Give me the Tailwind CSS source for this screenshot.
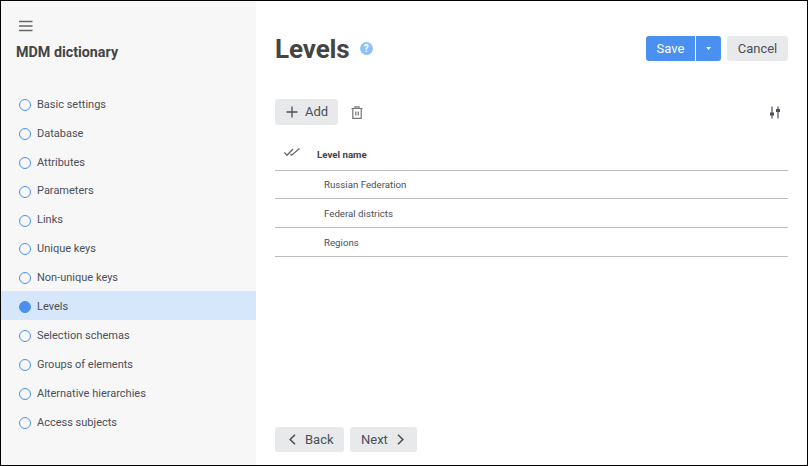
<!DOCTYPE html>
<html>
<head>
<meta charset="utf-8">
<script src="https://cdn.jsdelivr.net/npm/@tailwindcss/browser@4"></script>
</head>
<body class="m-0">
<div class="w-[808px] h-[466px] border border-black bg-white flex overflow-hidden font-['Roboto',sans-serif] text-[#4a4f5a]">
  <aside class="w-[255px] shrink-0 bg-[#f7f7f7] flex flex-col">
    <div class="pl-[18px] pt-[19px] h-[30px]">
      <svg width="14" height="12" viewBox="0 0 14 12" class="block"><path d="M0 1.5h13.5M0 6h13.5M0 10.5h13.5" stroke="#666" stroke-width="1.4" fill="none"/></svg>
    </div>
    <div class="pl-[15px] mt-[11px] text-[14.3px] leading-[20px] font-bold text-[#444]">MDM dictionary</div>
    <nav class="mt-[27px] flex flex-col text-[11px]">
      <div class="h-[28.9px] pt-[3.2px] flex items-center pl-[18px] gap-[6px]"><span class="w-[10px] h-[10px] rounded-full border border-[#4a90f0] box-content"></span><span>Basic settings</span></div>
      <div class="h-[28.9px] pt-[3.2px] flex items-center pl-[18px] gap-[6px]"><span class="w-[10px] h-[10px] rounded-full border border-[#4a90f0] box-content"></span><span>Database</span></div>
      <div class="h-[28.9px] pt-[3.2px] flex items-center pl-[18px] gap-[6px]"><span class="w-[10px] h-[10px] rounded-full border border-[#4a90f0] box-content"></span><span>Attributes</span></div>
      <div class="h-[28.9px] pt-[3.2px] flex items-center pl-[18px] gap-[6px]"><span class="w-[10px] h-[10px] rounded-full border border-[#4a90f0] box-content"></span><span>Parameters</span></div>
      <div class="h-[28.9px] pt-[3.2px] flex items-center pl-[18px] gap-[6px]"><span class="w-[10px] h-[10px] rounded-full border border-[#4a90f0] box-content"></span><span>Links</span></div>
      <div class="h-[28.9px] pt-[3.2px] flex items-center pl-[18px] gap-[6px]"><span class="w-[10px] h-[10px] rounded-full border border-[#4a90f0] box-content"></span><span>Unique keys</span></div>
      <div class="h-[28.9px] pt-[3.2px] flex items-center pl-[18px] gap-[6px]"><span class="w-[10px] h-[10px] rounded-full border border-[#4a90f0] box-content"></span><span>Non-unique keys</span></div>
      <div class="h-[28.9px] pt-[3.2px] flex items-center pl-[18px] gap-[6px] bg-[#d7e7fb]"><span class="w-[10px] h-[10px] rounded-full border border-[#4a90f0] bg-[#4a90f0] box-content"></span><span>Levels</span></div>
      <div class="h-[28.9px] pt-[3.2px] flex items-center pl-[18px] gap-[6px]"><span class="w-[10px] h-[10px] rounded-full border border-[#4a90f0] box-content"></span><span>Selection schemas</span></div>
      <div class="h-[28.9px] pt-[3.2px] flex items-center pl-[18px] gap-[6px]"><span class="w-[10px] h-[10px] rounded-full border border-[#4a90f0] box-content"></span><span>Groups of elements</span></div>
      <div class="h-[28.9px] pt-[3.2px] flex items-center pl-[18px] gap-[6px]"><span class="w-[10px] h-[10px] rounded-full border border-[#4a90f0] box-content"></span><span>Alternative hierarchies</span></div>
      <div class="h-[28.9px] pt-[3.2px] flex items-center pl-[18px] gap-[6px]"><span class="w-[10px] h-[10px] rounded-full border border-[#4a90f0] box-content"></span><span>Access subjects</span></div>
    </nav>
  </aside>
  <main class="flex-1 flex flex-col pl-[19px] pr-[19px]">
    <div class="flex items-center justify-between pt-[32px] h-[62px]">
      <div class="flex items-center gap-[10px]">
        <h1 class="text-[26px] leading-[34px] mt-[2px] font-bold text-[#444] tracking-[-0.1px]">Levels</h1>
        <span class="w-[13px] h-[13px] rounded-full bg-[#90c0fa] text-white text-[10px] font-bold leading-[13px] text-center mt-[1px]">?</span>
      </div>
      <div class="flex items-center gap-[6px] text-[13px]">
        <div class="flex h-[25px] rounded-[3px] overflow-hidden text-white">
          <div class="w-[49px] pt-[1px] bg-[#4a90f0] flex items-center justify-center">Save</div>
          <div class="w-[25px] ml-[1px] bg-[#4a90f0] flex items-center justify-center"><svg width="5" height="3" viewBox="0 0 5 3"><path d="M0 0h5L2.5 3z" fill="#fff"/></svg></div>
        </div>
        <div class="w-[61px] h-[25px] pt-[1px] rounded-[3px] bg-[#e8e9eb] flex items-center justify-center">Cancel</div>
      </div>
    </div>
    <div class="flex items-center mt-[36px] h-[26px] text-[13px]">
      <div class="w-[63px] h-[26px] rounded-[3px] bg-[#e8e9eb] flex items-center pl-[11px] gap-[7px]">
        <svg width="12" height="12" viewBox="0 0 12 12"><path d="M6 0.5v11M0.5 6h11" stroke="#4a4f5a" stroke-width="1.3" fill="none"/></svg>
        <span>Add</span>
      </div>
      <svg class="ml-[13px]" width="12" height="13" viewBox="0 0 12 13" fill="none" stroke="#777" stroke-width="1.2"><path d="M0.5 2.5h11M4 2.5V0.8h4v1.7M1.8 2.5v9.8h8.4V2.5M4.8 5.5v4M7.2 5.5v4"/></svg>
      <svg class="ml-auto mr-[7px]" width="12" height="13" viewBox="0 0 12 13" fill="none" stroke="#4a4f5a" stroke-width="1.2"><path d="M3 0.5v12M9 0.5v12"/><rect x="1" y="6.5" width="4" height="3" fill="#4a4f5a" stroke="none"/><rect x="7" y="3" width="4" height="3" fill="#4a4f5a" stroke="none"/></svg>
    </div>
    <div class="mt-[15px] flex flex-col text-[9.7px]">
      <div class="h-[31px] flex items-center border-b border-[#bdbdbd] font-bold text-[#444]">
        <svg class="ml-[9px] mb-[5px]" width="16" height="9" viewBox="0 0 16 9" fill="none" stroke="#666" stroke-width="1.3"><path d="M0.3 4.5L3 7.2 9 1M6.5 6L7.7 7.2 15.5 0.5"/></svg>
        <span class="ml-[17px]">Level name</span>
      </div>
      <div class="h-[28.4px] pt-[1px] flex items-center border-b border-[#bdbdbd] pl-[49px]">Russian Federation</div>
      <div class="h-[29px] pt-[1px] flex items-center border-b border-[#bdbdbd] pl-[49px]">Federal districts</div>
      <div class="h-[29px] pt-[1px] flex items-center border-b border-[#bdbdbd] pl-[49px]">Regions</div>
    </div>
    <div class="mt-auto mb-[13px] flex gap-[6px] text-[13px]">
      <div class="w-[69px] h-[25px] rounded-[3px] bg-[#e8e9eb] flex items-center pl-[14px] gap-[9px]">
        <svg width="7" height="11" viewBox="0 0 7 11" fill="none" stroke="#4a4f5a" stroke-width="1.6"><path d="M6 0.8L1.2 5.5 6 10.2"/></svg>
        <span>Back</span>
      </div>
      <div class="w-[67px] h-[25px] rounded-[3px] bg-[#e8e9eb] flex items-center pl-[11px] gap-[9px]">
        <span>Next</span>
        <svg width="7" height="11" viewBox="0 0 7 11" fill="none" stroke="#4a4f5a" stroke-width="1.6"><path d="M1 0.8L5.8 5.5 1 10.2"/></svg>
      </div>
    </div>
  </main>
</div>
</body>
</html>
